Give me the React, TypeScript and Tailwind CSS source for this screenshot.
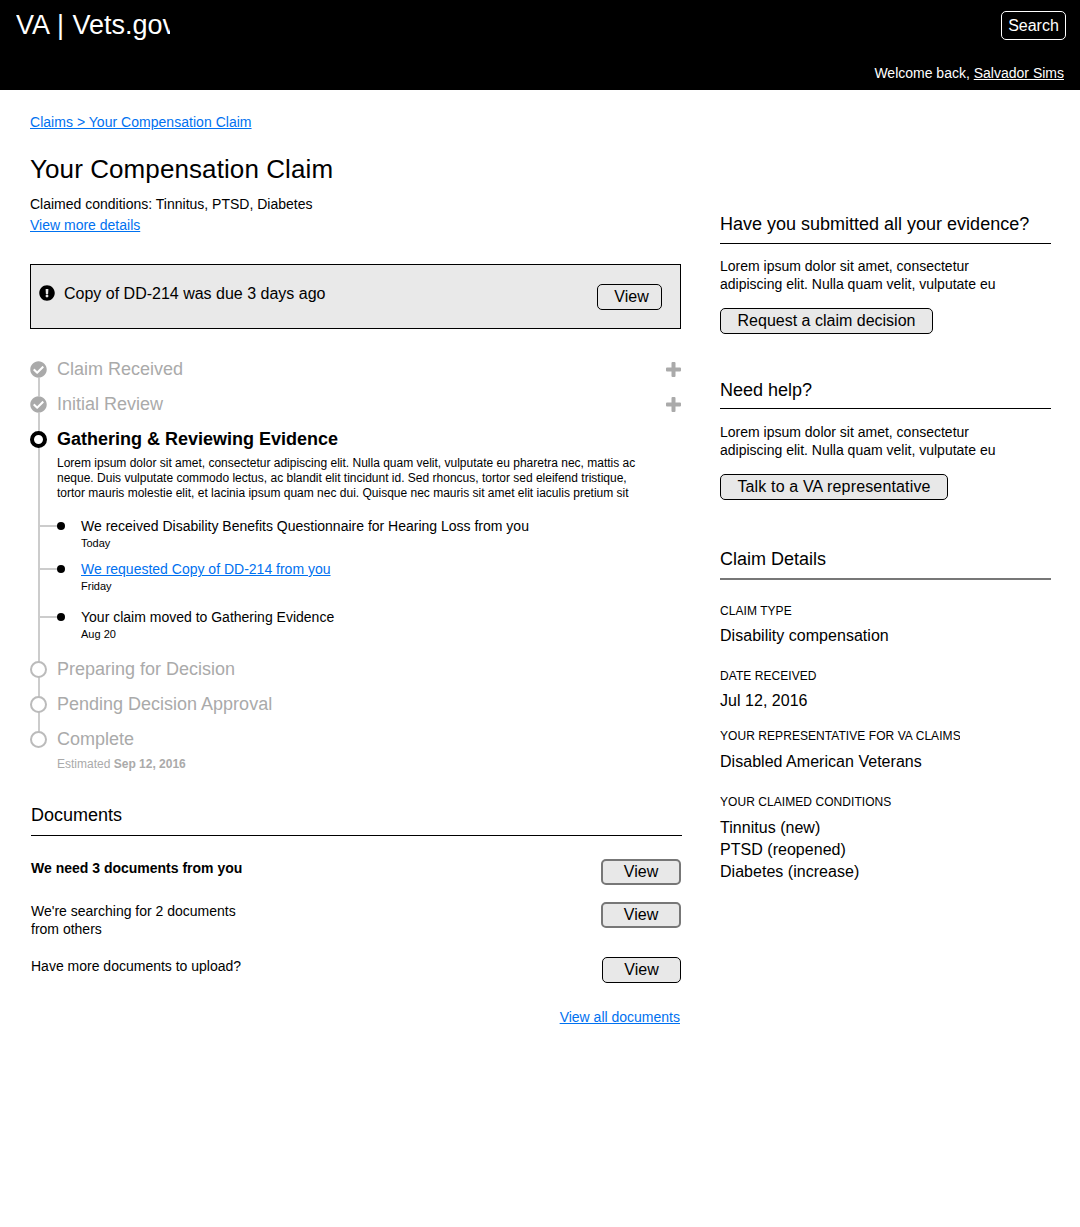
import { FaCheckCircle, FaExclamationCircle } from "react-icons/fa";

const lorem2 = "Lorem ipsum dolor sit amet, consectetur adipiscing elit. Nulla quam velit, vulputate eu";

const Btn: React.FC<{ label: string; className: string }> = ({ label, className }) => (
  <button className={`block rounded-[5px] bg-[#e8e8e8] text-center text-black ${className}`}>{label}</button>
);

const Step: React.FC<{ state: "done" | "todo"; label: string; plus?: boolean }> = ({ state, label, plus }) => (
  <div className="flex h-[35px] items-center">
    <div className="relative z-10 flex w-[27px] shrink-0 justify-start">
      {state === "done" ? (
        <span className="rounded-full bg-white">
          <FaCheckCircle className="block h-[17px] w-[17px] text-[#aaaaaa]" />
        </span>
      ) : (
        <span className="block h-[17px] w-[17px] rounded-full border-2 border-[#bbbbbb] bg-white" />
      )}
    </div>
    <span className="flex-1 text-[18px] text-[#aaaaaa]">{label}</span>
    {plus && (
      <svg viewBox="0 0 15 15" className="h-[15px] w-[15px] text-[#aaaaaa]" fill="currentColor">
        <path d="M5.5 1a1 1 0 0 1 1-1h2a1 1 0 0 1 1 1v4.5H14a1 1 0 0 1 1 1v2a1 1 0 0 1-1 1H9.5V14a1 1 0 0 1-1 1h-2a1 1 0 0 1-1-1V9.5H1a1 1 0 0 1-1-1v-2a1 1 0 0 1 1-1h4.5z" />
      </svg>
    )}
  </div>
);

const Event: React.FC<{ title: string; date: string; link?: boolean; className: string }> = ({ title, date, link, className }) => (
  <div className={`relative pl-[51px] ${className}`}>
    <span className="absolute left-[8px] top-[9px] h-[2px] w-[20px] bg-[#cccccc]" />
    <span className="absolute left-[27px] top-[6px] h-[8px] w-[8px] rounded-full bg-black" />
    {link ? (
      <a className="block text-[14px] leading-[20px] text-[#0071f0] underline">{title}</a>
    ) : (
      <p className="text-[14px] leading-[20px]">{title}</p>
    )}
    <p className="text-[11px] leading-[14px]">{date}</p>
  </div>
);

const Detail: React.FC<{ label: string; className: string; valueGap: string; values: string[] }> = ({ label, className, valueGap, values }) => (
  <div className={className}>
    <p className="w-[240px] overflow-hidden whitespace-nowrap text-[12px] leading-[14px] tracking-[0.06px]">{label}</p>
    <div className={`${valueGap} text-[16px] leading-[22px] tracking-[0.03px]`}>
      {values.map((v) => (
        <p key={v}>{v}</p>
      ))}
    </div>
  </div>
);

export default function App() {
  return (
    <div className="min-h-[1227px] bg-white text-black [font-family:'Liberation_Sans',Arial,sans-serif]">
      <header className="flex h-[90px] justify-between bg-black pl-[16px] pr-[14px] text-white">
        <div className="w-[154px] overflow-hidden whitespace-nowrap pt-[8px] text-[27px] leading-[34px] [word-spacing:1px]">VA | Vets.gov</div>
        <div className="flex flex-col items-end">
          <button className="mt-[11px] h-[29px] w-[65px] rounded-[5px] border border-white text-[16px]">Search</button>
          <p className="mr-[2px] mt-[24px] text-[14px] leading-[18px]">
            Welcome back, <a className="underline">Salvador Sims</a>
          </p>
        </div>
      </header>

      <main className="flex pl-[30px]">
        <section className="w-[651px]">
          <a className="mt-[23px] block text-[14px] leading-[18px] tracking-[0.03px] text-[#0071f0] underline">Claims &gt; Your Compensation Claim</a>
          <h1 className="mt-[18px] text-[26px] leading-[40px] tracking-[0.09px]">Your Compensation Claim</h1>
          <p className="mt-[5px] text-[14px] leading-[20px]">Claimed conditions: Tinnitus, PTSD, Diabetes</p>
          <a className="mt-[1px] block text-[14px] leading-[20px] text-[#0071f0] underline">View more details</a>

          <div className="mt-[29px] flex h-[65px] items-start border border-black bg-[#e9e9e9] pl-[8px] pr-[18px]">
            <FaExclamationCircle className="mt-[20px] h-[16px] w-[16px]" />
            <p className="ml-[9px] flex-1 pt-[19px] text-[16px] leading-[19px]">Copy of DD-214 was due 3 days ago</p>
            <Btn label="View" className="mt-[19px] h-[26px] w-[65px] border border-black pl-[4px] text-[16px] leading-[22px]" />
          </div>

          <div className="relative mt-[23px]">
            <span className="absolute bottom-[17px] left-[7.5px] top-[17px] w-[2px] bg-[#cccccc]" />
            <Step state="done" label="Claim Received" plus />
            <Step state="done" label="Initial Review" plus />
            <div className="flex h-[35px] items-center">
              <div className="relative z-10 flex w-[27px] shrink-0 justify-start">
                <span className="block h-[17px] w-[17px] rounded-full border-[4px] border-black bg-white" />
              </div>
              <span className="text-[18px] font-bold">Gathering &amp; Reviewing Evidence</span>
            </div>
            <p className="ml-[27px] mt-[-1px] w-[585px] text-[12px] leading-[15px]">
              Lorem ipsum dolor sit amet, consectetur adipiscing elit. Nulla quam velit, vulputate eu pharetra nec, mattis ac neque. Duis vulputate commodo lectus, ac blandit elit tincidunt id. Sed rhoncus, tortor sed eleifend tristique, tortor mauris molestie elit, et lacinia ipsum quam nec dui. Quisque nec mauris sit amet elit iaculis pretium sit
            </p>
            <Event className="mt-[15px]" title="We received Disability Benefits Questionnaire for Hearing Loss from you" date="Today" />
            <Event className="mt-[9px]" link title="We requested Copy of DD-214 from you" date="Friday" />
            <Event className="mt-[14px]" title="Your claim moved to Gathering Evidence" date="Aug 20" />
            <div className="mt-[11px]">
              <Step state="todo" label="Preparing for Decision" />
              <Step state="todo" label="Pending Decision Approval" />
              <Step state="todo" label="Complete" />
            </div>
          </div>
          <p className="ml-[27px] mt-[-1px] text-[12px] leading-[16px] text-[#aaaaaa]">
            Estimated <b>Sep 12, 2016</b>
          </p>

          <div className="ml-[1px] mr-[-1px] mt-[30px] border-b border-black pb-[7px] text-[18px] leading-[26px]">Documents</div>
          <div className="flex items-start justify-between pl-[1px] pt-[21px]">
            <p className="text-[14px] font-bold leading-[22px]">We need 3 documents from you</p>
            <Btn label="View" className="mt-[2px] h-[26px] w-[80px] border-2 border-[#777777] text-[16px] leading-[20px]" />
          </div>
          <div className="mt-[17px] flex items-start justify-between pl-[1px]">
            <p className="w-[220px] text-[14px] leading-[18px]">We're searching for 2 documents from others</p>
            <Btn label="View" className="h-[26px] w-[80px] border-2 border-[#777777] text-[16px] leading-[18px]" />
          </div>
          <div className="mt-[19px] flex items-start justify-between pl-[1px]">
            <p className="text-[14px] leading-[18px]">Have more documents to upload?</p>
            <Btn label="View" className="h-[26px] w-[79px] border border-black text-[16px] leading-[22px]" />
          </div>
          <a className="mt-[24px] block pr-[1px] text-right text-[14px] leading-[20px] text-[#0071f0] underline">View all documents</a>
        </section>

        <aside className="ml-[39px] w-[331px] pt-[122px]">
          <h2 className="border-b border-black pb-[7px] text-[18px] leading-[24px]">Have you submitted all your evidence?</h2>
          <p className="mt-[13px] w-[300px] text-[14px] leading-[18px]">{lorem2}</p>
          <Btn label="Request a claim decision" className="mt-[15px] h-[26px] w-[213px] border border-black text-[16px] leading-[22px]" />

          <h2 className="mt-[44px] border-b border-black pb-[6px] text-[18px] leading-[24px]">Need help?</h2>
          <p className="mt-[14px] w-[300px] text-[14px] leading-[18px]">{lorem2}</p>
          <Btn label="Talk to a VA representative" className="mt-[15px] h-[26px] w-[228px] border border-black text-[16px] leading-[22px] tracking-[0.15px]" />

          <h2 className="mt-[47px] border-b-2 border-[#777777] pb-[7px] text-[18px] leading-[24px]">Claim Details</h2>
          <Detail className="mt-[24px]" valueGap="mt-[7px]" label="CLAIM TYPE" values={["Disability compensation"]} />
          <Detail className="mt-[22px]" valueGap="mt-[7px]" label="DATE RECEIVED" values={["Jul 12, 2016"]} />
          <Detail className="mt-[17px]" valueGap="mt-[8px]" label="YOUR REPRESENTATIVE FOR VA CLAIMS" values={["Disabled American Veterans"]} />
          <Detail className="mt-[22px]" valueGap="mt-[8px]" label="YOUR CLAIMED CONDITIONS" values={["Tinnitus (new)", "PTSD (reopened)", "Diabetes (increase)"]} />
        </aside>
      </main>
    </div>
  );
}
